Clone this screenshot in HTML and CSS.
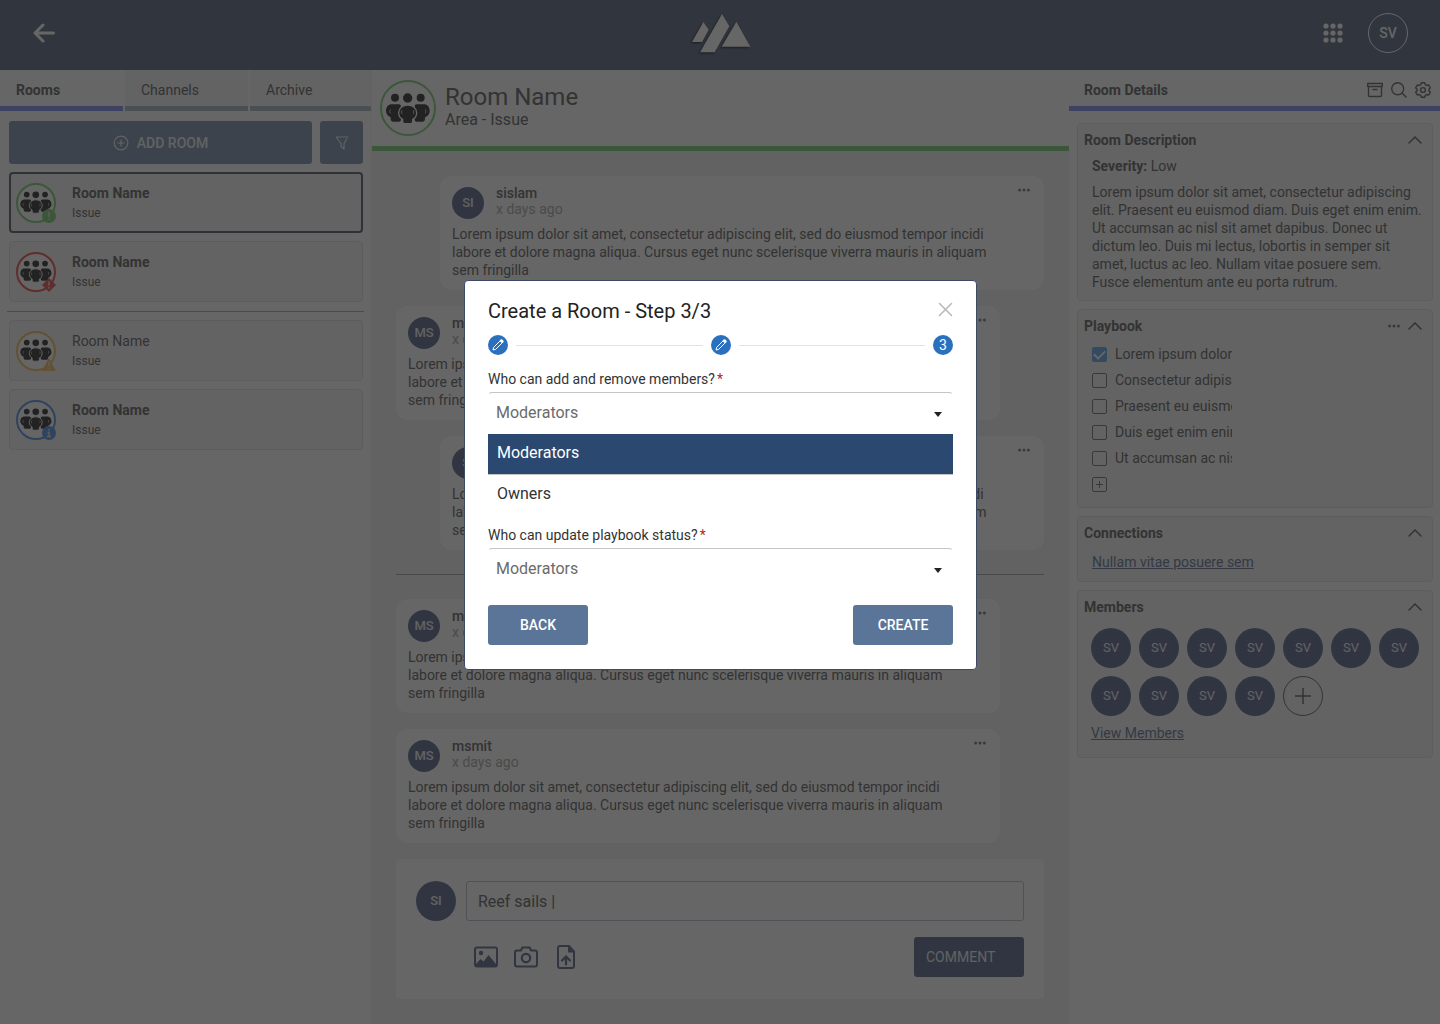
FILE: index.html
```html
<!DOCTYPE html>
<html lang="en">

<head>
  <meta charset="UTF-8">
  <meta name="viewport" content="width=device-width, initial-scale=1.0">
  <title>Create a Room</title>
  <link rel="stylesheet" href="styles.css">
</head>

<body>
  <!-- shared icons -->
  <svg class="sprite" aria-hidden="true">
    <symbol id="people" viewBox="-1 0 168 168">
      <g id="side">
        <circle cx="44" cy="53" r="12" />
        <path d="M32 73H56Q62 73 62 80V119Q62 125 56 125H38Q31 125 31 118V112C22 108 17 101 17 93C17 82 23 74 32 73Z" />
        <path class="slit" d="M30 88Q27 94 30 100" />
      </g>
      <use href="#side" transform="translate(165 0) scale(-1 1)" />
      <path class="cut" d="M82 75C98 75 109 85 109 98C109 108 103 115 97 118V125Q97 131 90 131H74Q67 131 67 125V118C61 115 55 108 55 98C55 85 66 75 82 75Z" />
      <circle cx="82" cy="54" r="14" />
      <path class="slit" d="M65 90Q62 96 65 102M99 90Q102 96 99 102" />
    </symbol>
    <symbol id="chevron" viewBox="0 0 14 8">
      <path d="M1 7L7 1L13 7" fill="none" stroke="currentColor" stroke-width="1.5" stroke-linecap="round" />
    </symbol>
    <symbol id="dots" viewBox="0 0 12 4">
      <circle cx="1.6" cy="2" r="1.5" /><circle cx="6" cy="2" r="1.5" /><circle cx="10.4" cy="2" r="1.5" />
    </symbol>
    <symbol id="pencil" viewBox="0 0 12 12">
      <path d="M1 11L1.7 8.3L8.1 1.9L10.1 3.9L3.7 10.3Z" fill="none" stroke="#fff" stroke-linejoin="round" />
      <path d="M7.6 1.4L9 .3Q9.6 0 10.2 .5L11.5 1.8Q12 2.4 11.5 3L10.5 4.3Z" fill="#fff" />
    </symbol>
  </svg>

  <header class="topbar">
    <button class="icon-btn back" aria-label="Back">
      <svg width="24" height="20" viewBox="0 0 24 20"><path d="M11 2L3 10L11 18M3.500 10H21.500" fill="none" stroke="currentColor" stroke-width="3" stroke-linecap="round" stroke-linejoin="round" /></svg>
    </button>
    <svg class="logo" width="64" height="44" viewBox="85 36 192 132">
      <path d="M131 69L147 92L127 129H97Z M187 45L209 82L165 160H121Z M230 68L272 143H186Z" />
    </svg>
    <div class="topbar-right">
      <button class="icon-btn" aria-label="Apps">
        <svg width="20" height="20" viewBox="0 0 20 20" fill="currentColor">
          <circle cx="3" cy="3" r="2.600" /><circle cx="10" cy="3" r="2.600" /><circle cx="17" cy="3" r="2.600" />
          <circle cx="3" cy="10" r="2.600" /><circle cx="10" cy="10" r="2.600" /><circle cx="17" cy="10" r="2.600" />
          <circle cx="3" cy="17" r="2.600" /><circle cx="10" cy="17" r="2.600" /><circle cx="17" cy="17" r="2.600" />
        </svg>
      </button>
      <button class="user">SV</button>
    </div>
  </header>

  <div class="layout">
    <aside class="rooms">
      <nav class="tabs">
        <a class="tab active" href="#rooms">Rooms</a>
        <a class="tab" href="#channels">Channels</a>
        <a class="tab" href="#archive">Archive</a>
      </nav>
      <div class="room-list">
        <div class="room-actions">
          <button class="add-room">
            <svg width="16" height="16" viewBox="0 0 16 16" fill="none" stroke="currentColor" stroke-width="1.2"><circle cx="8" cy="8" r="6.800" /><path d="M8 5V11M5 8H11" stroke-linecap="round" /></svg>
            ADD ROOM
          </button>
          <button class="filter" aria-label="Filter">
            <svg width="14" height="14" viewBox="0 0 14 14" fill="none" stroke="currentColor" stroke-width="1.2"><path d="M1 1H13.500M1 1L6 7.500V10.500L9 13V7.500L12 2.500" stroke-linejoin="round" /></svg>
          </button>
        </div>

        <a class="room selected" href="#room1">
          <span class="room-icon green">
            <svg><use href="#people" /></svg>
            <svg class="badge" viewBox="0 0 14 14"><circle cx="7" cy="7" r="7" /><path d="M7 3V8M7 9.500V11" /></svg>
          </span>
          <span class="room-text"><b>Room Name</b><small>Issue</small></span>
        </a>
        <a class="room" href="#room2">
          <span class="room-icon red">
            <svg><use href="#people" /></svg>
            <svg class="badge" viewBox="0 0 14 14"><path class="shape" d="M7 0L14 7L7 14L0 7Z" /><path d="M7 3.500V7.500M7 9V10.500" /></svg>
          </span>
          <span class="room-text"><b>Room Name</b><small>Issue</small></span>
        </a>
        <hr class="room-divider">
        <a class="room read" href="#room3">
          <span class="room-icon yellow">
            <svg><use href="#people" /></svg>
            <svg class="badge" viewBox="0 0 14 14"><path class="shape" d="M7 1L14 14H0Z" /><path d="M7 5V9.500M7 11V12.500" /></svg>
          </span>
          <span class="room-text"><b>Room Name</b><small>Issue</small></span>
        </a>
        <a class="room" href="#room4">
          <span class="room-icon blue">
            <svg><use href="#people" /></svg>
            <svg class="badge" viewBox="0 0 14 14"><circle cx="7" cy="7" r="7" /><path d="M7 3V4.500M5.500 6.500H7V10.500M5 10.500H9" /></svg>
          </span>
          <span class="room-text"><b>Room Name</b><small>Issue</small></span>
        </a>
      </div>
    </aside>

    <main class="chat">
      <div class="chat-head">
        <span class="room-icon large green"><svg><use href="#people" /></svg></span>
        <div>
          <h1>Room Name</h1>
          <p>Area - Issue</p>
        </div>
      </div>

      <div class="chat-body">
        <article class="message mine">
          <div class="message-head">
            <span class="avatar small">SI</span>
            <div><b>sislam</b><time>x days ago</time></div>
            <button class="icon-btn more" aria-label="More"><svg width="12" height="4"><use href="#dots" /></svg></button>
          </div>
          <p>Lorem ipsum dolor sit amet, consectetur adipiscing elit, sed do eiusmod tempor incidi labore et dolore magna aliqua. Cursus eget nunc scelerisque viverra mauris in aliquam sem fringilla</p>
        </article>
        <article class="message">
          <div class="message-head">
            <span class="avatar small">MS</span>
            <div><b>msmit</b><time>x days ago</time></div>
            <button class="icon-btn more" aria-label="More"><svg width="12" height="4"><use href="#dots" /></svg></button>
          </div>
          <p>Lorem ipsum dolor sit amet, consectetur adipiscing elit, sed do eiusmod tempor incidi labore et dolore magna aliqua. Cursus eget nunc scelerisque viverra mauris in aliquam sem fringilla</p>
        </article>
        <article class="message mine">
          <div class="message-head">
            <span class="avatar small">SI</span>
            <div><b>sislam</b><time>x days ago</time></div>
            <button class="icon-btn more" aria-label="More"><svg width="12" height="4"><use href="#dots" /></svg></button>
          </div>
          <p>Lorem ipsum dolor sit amet, consectetur adipiscing elit, sed do eiusmod tempor incidi labore et dolore magna aliqua. Cursus eget nunc scelerisque viverra mauris in aliquam sem fringilla</p>
        </article>
        <hr class="chat-divider">
        <article class="message">
          <div class="message-head">
            <span class="avatar small">MS</span>
            <div><b>msmit</b><time>x days ago</time></div>
            <button class="icon-btn more" aria-label="More"><svg width="12" height="4"><use href="#dots" /></svg></button>
          </div>
          <p>Lorem ipsum dolor sit amet, consectetur adipiscing elit, sed do eiusmod tempor incidi labore et dolore magna aliqua. Cursus eget nunc scelerisque viverra mauris in aliquam sem fringilla</p>
        </article>
        <article class="message">
          <div class="message-head">
            <span class="avatar small">MS</span>
            <div><b>msmit</b><time>x days ago</time></div>
            <button class="icon-btn more" aria-label="More"><svg width="12" height="4"><use href="#dots" /></svg></button>
          </div>
          <p>Lorem ipsum dolor sit amet, consectetur adipiscing elit, sed do eiusmod tempor incidi labore et dolore magna aliqua. Cursus eget nunc scelerisque viverra mauris in aliquam sem fringilla</p>
        </article>

        <form class="composer">
          <span class="avatar">SI</span>
          <div class="composer-main">
            <input type="text" value="Reef sails |" aria-label="Comment">
            <div class="composer-row">
              <button type="button" class="icon-btn" aria-label="Image">
                <svg width="24" height="24" viewBox="0 0 24 24"><rect x="1" y="2.500" width="22" height="19" rx="2" fill="none" stroke="currentColor" stroke-width="2" /><circle cx="7" cy="8" r="2.200" fill="currentColor" /><path d="M2 21V19L6.500 14L9.500 16.500L14.500 10L22 19V21Z" fill="currentColor" /></svg>
              </button>
              <button type="button" class="icon-btn" aria-label="Camera">
                <svg width="24" height="24" viewBox="0 0 24 24" fill="none" stroke="currentColor" stroke-width="2"><path d="M3 5.500H7L8.300 2.500H15.700L17 5.500H21Q23 5.500 23 7.500V19.500Q23 21.500 21 21.500H3Q1 21.500 1 19.500V7.500Q1 5.500 3 5.500Z" stroke-linejoin="round" /><circle cx="12" cy="13" r="4.200" stroke-width="2.200" /></svg>
              </button>
              <button type="button" class="icon-btn" aria-label="Upload file">
                <svg width="24" height="24" viewBox="0 0 24 24" fill="none" stroke="currentColor" stroke-width="2"><path d="M6 1H15L20 6.500V21Q20 23 18 23H6Q4 23 4 21V3Q4 1 6 1Z" stroke-linejoin="round" /><path d="M14 1V7.500H20Z" fill="currentColor" stroke="none" /><path d="M12 19.500V12M8 15.500L12 11.500L16 15.500" stroke-width="2.200" stroke-linecap="round" /></svg>
              </button>
              <button type="button" class="comment">COMMENT</button>
            </div>
          </div>
        </form>
      </div>
    </main>

    <aside class="details">
      <div class="details-head">
        <h2>Room Details</h2>
        <button class="icon-btn" aria-label="Archive">
          <svg width="16" height="16" viewBox="0 0 16 16" fill="none" stroke="currentColor"><path d="M.700 1.500H15.300V4.500H.700ZM1.500 4.500V13.500Q1.500 14.500 2.500 14.500H13.500Q14.500 14.500 14.500 13.500V4.500M5.500 7.500H10.500" stroke-linejoin="round" stroke-width="1.400" /></svg>
        </button>
        <button class="icon-btn" aria-label="Search">
          <svg width="16" height="16" viewBox="0 0 16 16" fill="none" stroke="currentColor" stroke-width="1.400"><circle cx="6.700" cy="6.700" r="6" /><path d="M11 11L15.500 15.500" /></svg>
        </button>
        <button class="icon-btn" aria-label="Settings">
          <svg width="16" height="16" viewBox="0 0 16 16" fill="none" stroke="currentColor" stroke-width="1.400"><circle cx="8" cy="8" r="2.400" /><path d="M6.300 .700H9.700L10.300 2.700L11.600 3.500L13.700 3L15.300 5.900L13.900 7.300V8.700L15.300 10.100L13.700 13L11.600 12.500L10.300 13.300L9.700 15.300H6.300L5.700 13.300L4.400 12.500L2.300 13L.700 10.100L2.100 8.700V7.300L.700 5.900L2.300 3L4.400 3.500L5.700 2.700Z" stroke-linejoin="round" /></svg>
        </button>
      </div>

      <div class="details-list">
        <section class="card description">
          <div class="card-head"><h3>Room Description</h3><button class="icon-btn" aria-label="Collapse"><svg width="14" height="8"><use href="#chevron" /></svg></button></div>
          <p class="severity"><b>Severity:</b> Low</p>
          <p>Lorem ipsum dolor sit amet, consectetur adipiscing elit. Praesent eu euismod diam. Duis eget enim enim. Ut accumsan ac nisl sit amet dapibus. Donec ut dictum leo. Duis mi lectus, lobortis in semper sit amet, luctus ac leo. Nullam vitae posuere sem. Fusce elementum ante eu porta rutrum.</p>
        </section>

        <section class="card">
          <div class="card-head"><h3>Playbook</h3><button class="icon-btn" aria-label="More"><svg class="dots" width="12" height="4"><use href="#dots" /></svg></button><button class="icon-btn" aria-label="Collapse"><svg width="14" height="8"><use href="#chevron" /></svg></button></div>
          <label class="task"><input type="checkbox" checked><span>Lorem ipsum dolor</span></label>
          <label class="task"><input type="checkbox"><span>Consectetur adipiscing</span></label>
          <label class="task"><input type="checkbox"><span>Praesent eu euismod</span></label>
          <label class="task"><input type="checkbox"><span>Duis eget enim enim</span></label>
          <label class="task"><input type="checkbox"><span>Ut accumsan ac nisl</span></label>
          <div class="task">
            <button class="add-task" aria-label="Add task"><svg width="15" height="15" viewBox="0 0 15 15" fill="none" stroke="currentColor"><rect x=".5" y=".5" width="14" height="14" rx="1.500" /><path d="M7.500 4V11M4 7.500H11" /></svg></button>
          </div>
        </section>

        <section class="card connections">
          <div class="card-head"><h3>Connections</h3><button class="icon-btn" aria-label="Collapse"><svg width="14" height="8"><use href="#chevron" /></svg></button></div>
          <a href="#connection">Nullam vitae posuere sem</a>
        </section>

        <section class="card members">
          <div class="card-head"><h3>Members</h3><button class="icon-btn" aria-label="Collapse"><svg width="14" height="8"><use href="#chevron" /></svg></button></div>
          <div class="member-list">
            <span class="avatar">SV</span>
            <span class="avatar">SV</span>
            <span class="avatar">SV</span>
            <span class="avatar">SV</span>
            <span class="avatar">SV</span>
            <span class="avatar">SV</span>
            <span class="avatar">SV</span>
            <span class="avatar">SV</span>
            <span class="avatar">SV</span>
            <span class="avatar">SV</span>
            <span class="avatar">SV</span>
            <button class="add-member" aria-label="Add member"><svg width="16" height="16" viewBox="0 0 16 16" stroke="currentColor" stroke-width="1.500"><path d="M8 0V16M0 8H16" /></svg></button>
          </div>
          <a href="#all-members">View Members</a>
        </section>
      </div>
    </aside>
  </div>

  <div class="backdrop">
    <form class="modal" role="dialog" aria-labelledby="modal-title">
      <div class="modal-head">
        <h2 id="modal-title">Create a Room - Step 3/3</h2>
        <button type="button" class="icon-btn close" aria-label="Close"><svg width="15" height="15" viewBox="0 0 15 15" stroke="currentColor" stroke-width="1.500" stroke-linecap="round"><path d="M1.500 1.500L13.500 13.500M13.500 1.500L1.500 13.500" /></svg></button>
      </div>
      <div class="steps">
        <span class="step"><svg width="12" height="12"><use href="#pencil" /></svg></span>
        <i></i>
        <span class="step"><svg width="12" height="12"><use href="#pencil" /></svg></span>
        <i></i>
        <span class="step">3</span>
      </div>

      <label for="members">Who can add and remove members?<em>*</em></label>
      <div class="select">
        <select id="members"><option>Moderators</option><option>Owners</option></select>
      </div>
      <ul class="options" role="listbox" aria-label="Who can add and remove members">
        <li class="current" role="option" aria-selected="true">Moderators</li>
        <li role="option">Owners</li>
      </ul>

      <label for="playbook">Who can update playbook status?<em>*</em></label>
      <div class="select">
        <select id="playbook"><option>Moderators</option><option>Owners</option></select>
      </div>

      <div class="modal-actions">
        <button type="button">BACK</button>
        <button type="button">CREATE</button>
      </div>
    </form>
  </div>
</body>

</html>
```
FILE: styles.css
```css
* {
  box-sizing: border-box;
}
body {
  margin: 0;
  min-height: 100vh;
  display: flex;
  flex-direction: column;
  font-family: Roboto, "Liberation Sans", sans-serif;
  font-size: 14px;
  line-height: 18px;
  color: #808080;
  background: #fff;
}
h1, h2, h3, p {
  margin: 0;
}
button, input, select {
  font-family: inherit;
  font-size: 14px;
  color: inherit;
}
button {
  padding: 0;
  border: 0;
  border-radius: 3px;
  cursor: pointer;
}
.icon-btn {
  display: flex;
  background: none;
}
.sprite {
  position: absolute;
  width: 0;
  height: 0;
}
.slit {
  fill: none;
  stroke: #ccc;
  stroke-width: 3;
}
.cut {
  stroke: #fff;
  stroke-width: 4;
}

/* top bar */
.topbar {
  display: grid;
  grid-template-columns: 1fr auto 1fr;
  align-items: center;
  height: 70px;
  padding: 0 32px;
  padding-bottom: 4px;
  background: #7b859b;
  color: #fff;
}
.back {
  justify-self: start;
}
.logo {
  fill: #fff;
  filter: drop-shadow(-1px 1px 1px #444);
}
.topbar-right {
  display: flex;
  justify-content: flex-end;
  align-items: center;
  gap: 25px;
}
.user {
  width: 40px;
  height: 40px;
  border: 1px solid #fff;
  border-radius: 50%;
  background: none;
  font-weight: 500;
}

.layout {
  flex: 1;
  display: grid;
  grid-template-columns: 371px 1fr 371px;
}

/* rooms */
.tabs {
  display: flex;
  gap: 2px;
}
.tab {
  width: 123px;
  height: 41px;
  padding: 11px 16px;
  border-bottom: 5px solid #bac6d0;
  background: #f7f7f7;
  color: #808080;
  text-decoration: none;
}
.tab:last-child {
  flex: 1;
}
.tab.active {
  border-color: #9aa2f4;
  background: #fff;
  font-weight: 700;
}
.room-list {
  display: flex;
  flex-direction: column;
  gap: 8px;
  padding: 10px 8px 10px 9px;
}
.room-actions {
  display: flex;
  gap: 8px;
}
.room-actions button {
  display: flex;
  align-items: center;
  justify-content: center;
  gap: 8px;
  height: 43px;
  background: #98a9c1;
  color: #f4f4f4;
  font-weight: 500;
}
.add-room {
  flex: 1;
}
.room-actions .filter {
  width: 43px;
}
.room {
  display: flex;
  align-items: center;
  gap: 16px;
  height: 61px;
  padding: 0 6px;
  border: 1px solid #e8e8e8;
  border-radius: 4px;
  background: #f8f8f8;
  color: inherit;
  text-decoration: none;
}
.room.selected {
  padding: 0 5px;
  border: 2px solid #757c88;
}
.room-icon {
  position: relative;
  flex: none;
  width: 40px;
  height: 40px;
  border: 2px solid currentColor;
  border-radius: 50%;
  background: #fff;
}
.room-icon svg {
  display: block;
  width: 40px;
  height: 40px;
  margin: -3px -2px;
  fill: #555;
}
.room-icon.large,
.room-icon.large svg {
  width: 56px;
  height: 56px;
}
.room-icon.large svg {
  margin: -2px;
}
.room-icon .badge {
  position: absolute;
  right: -2px;
  bottom: -2px;
  width: 14px;
  height: 14px;
  margin: 0;
  fill: currentColor;
  stroke: #e8e8e8;
  stroke-width: 1.5;
}
.badge circle,
.badge .shape {
  stroke: none;
}
.green {
  color: #96d890;
}
.red {
  color: #f07070;
}
.yellow {
  color: #f4cc7c;
}
.blue {
  color: #78a8ec;
}
.room-text b,
.room-text small {
  display: block;
  line-height: 20px;
}
.room-text small {
  font-size: 12px;
}
.room.read b {
  font-weight: 400;
}
.room-divider {
  width: calc(100% + 3px);
  height: 2px;
  margin: 0 -2px;
  border: 0;
  border-bottom: 1px solid #bbb;
}

/* chat */
.chat {
  display: flex;
  flex-direction: column;
  min-width: 0;
  border-left: 1px solid #f5f5f5;
  background: #f5f5f5;
}
.chat-head {
  display: flex;
  gap: 9px;
  height: 81px;
  padding: 10px 8px;
  border-bottom: 5px solid #96d890;
  background: #fff;
}
.chat-head h1 {
  font-size: 24px;
  font-weight: 400;
  line-height: 34px;
}
.chat-head p {
  font-size: 16px;
  line-height: 12px;
}
.chat-body {
  display: flex;
  flex-direction: column;
  gap: 16px;
  padding: 25px;
  padding-left: 24px;
}
.message {
  margin-right: 44px;
  padding: 9px 12px 11px;
  border-radius: 12px;
  background: #fff;
}
.message.mine {
  margin: 0 0 0 44px;
}
.message p {
  padding-right: 32px;
}
.message-head {
  display: flex;
  align-items: flex-start;
  gap: 12px;
  height: 34px;
  margin-bottom: 6px;
}
.message-head b,
.message-head time {
  display: block;
  line-height: 16px;
}
.message-head b {
  font-weight: 500;
}
.message-head time {
  color: #bababa;
}
.more {
  margin: 3px 2px 0 auto;
}
.more svg,
.dots {
  fill: #909090;
}
.avatar {
  flex: none;
  display: flex;
  align-items: center;
  justify-content: center;
  width: 40px;
  height: 40px;
  border-radius: 50%;
  background: #7986a2;
  color: #f4f4f4;
  font-size: 13px;
}
.avatar.small {
  width: 32px;
  height: 32px;
  margin-top: 2px;
  font-weight: 500;
}
.chat-divider {
  width: 100%;
  margin: 8px 0;
  border: 0;
  border-bottom: 1px solid #b5b5b5;
}
.composer {
  display: flex;
  gap: 10px;
  padding: 22px 20px;
  border-radius: 4px;
  background: #fff;
}
.composer .avatar {
  font-weight: 500;
}
.composer-main {
  flex: 1;
}
.composer input {
  display: block;
  width: 100%;
  height: 40px;
  padding: 0 11px;
  border: 1px solid #c4cbd6;
  border-radius: 3px;
  background: #fff;
  font-size: 16px;
}
.composer-row {
  display: flex;
  align-items: center;
  gap: 16px;
  margin-top: 16px;
  padding-left: 8px;
  color: #7986a2;
}
.comment {
  width: 110px;
  height: 40px;
  margin-left: auto;
  padding-left: 12px;
  background: #7986a2;
  color: #f4f4f4;
  text-align: left;
}

/* details */
.details-head {
  display: flex;
  align-items: center;
  gap: 8px;
  height: 41px;
  padding: 3px 9px 0 15px;
  border-bottom: 5px solid #9aa2f4;
}
.details-head h2,
.card-head h3 {
  margin-right: auto;
  font-size: 14px;
  font-weight: 700;
}
.details-list {
  display: flex;
  flex-direction: column;
  gap: 8px;
  padding: 12px 7px 12px 8px;
}
.card {
  padding: 8px 10px 10px 14px;
  border: 1px solid #e8e8e8;
  border-radius: 4px;
  background: #f8f8f8;
}
.card-head {
  display: flex;
  align-items: center;
  gap: 8px;
  height: 16px;
  margin: 0 0 7px -8px;
}
.card a {
  color: #8290ac;
}
.severity {
  padding: 2px 0 8px;
}
.description {
  padding-bottom: 9px;
}
.task {
  display: flex;
  align-items: center;
  gap: 8px;
  height: 26px;
}
.task input {
  appearance: none;
  flex: none;
  display: grid;
  place-items: center;
  width: 15px;
  height: 15px;
  margin: 0;
  border: 1px solid #909090;
  border-radius: 2px;
}
.task input:checked {
  border-color: #80b8f0;
  background: #80b8f0;
}
.task input:checked::before {
  content: "";
  width: 9px;
  height: 5px;
  border: solid #fff;
  border-width: 0 0 2px 2px;
  transform: translateY(-1px) rotate(-45deg);
}
.task span {
  width: 117px;
  overflow: hidden;
  white-space: nowrap;
}
.add-task {
  display: flex;
  background: none;
  color: #909090;
}
.connections .card-head {
  margin-bottom: 12px;
}
.connections a,
.members a {
  display: block;
}
.members {
  padding: 8px 10px 15px 13px;
}
.members .card-head {
  margin: 0 0 13px -7px;
}
.member-list {
  display: flex;
  flex-wrap: wrap;
  gap: 8px;
  margin: 0 -4px 8px 0;
}
.add-member {
  display: grid;
  place-items: center;
  width: 40px;
  height: 40px;
  border: 1px solid #808080;
  border-radius: 50%;
  background: none;
}

/* modal */
.backdrop {
  position: fixed;
  top: 0;
  right: 0;
  bottom: 0;
  left: 0;
  display: flex;
  align-items: center;
  justify-content: center;
  padding: 0 0 74px 1px;
  background: rgba(0, 0, 0, 0.6);
}
.modal {
  width: 513px;
  padding: 18px 23px 24px;
  border: 1px solid #3c4a68;
  border-radius: 4px;
  background: #fff;
  color: #333;
}
.modal-head {
  display: flex;
  justify-content: space-between;
  height: 24px;
}
.modal-head h2 {
  font-size: 20px;
  font-weight: 400;
  line-height: 24px;
  color: #222;
}
.close {
  align-items: center;
  height: 20px;
  color: #b4b8bb;
}
.steps {
  display: flex;
  align-items: center;
  gap: 8px;
  margin: 12px 0 15px;
}
.steps i {
  flex: 1;
  height: 1px;
  background: #e2e2e2;
}
.step {
  display: flex;
  align-items: center;
  justify-content: center;
  width: 20px;
  height: 20px;
  border-radius: 50%;
  background: #2a70bf;
  color: #fff;
}
.modal label {
  display: block;
  margin-bottom: 4px;
}
.modal em {
  margin-left: 2px;
  color: #b3261e;
  font-style: normal;
}
.select {
  position: relative;
}
.select::after {
  content: "";
  position: absolute;
  top: 20px;
  right: 11px;
  border: 4px solid transparent;
  border-top: 5px solid #222;
  border-bottom: 0;
}
.select select {
  display: block;
  appearance: none;
  width: 100%;
  height: 41px;
  padding: 0 7px;
  border: 1px solid transparent;
  border-top-color: #c4c4c4;
  border-radius: 4px;
  background: #fff;
  color: #6b6b6b;
  font-size: 16px;
}
.options {
  margin: 1px 0 11px;
  padding: 0;
  list-style: none;
  font-size: 16px;
}
.options li {
  height: 40px;
  padding: 10px 9px;
}
.options .current {
  height: 41px;
  border-bottom: 1px solid #c4c4c4;
  background: #2b4871;
  color: #fff;
}
.modal-actions {
  display: flex;
  justify-content: space-between;
  margin-top: 16px;
}
.modal-actions button {
  width: 100px;
  height: 40px;
  background: #5b7599;
  color: #fff;
  font-weight: 500;
}
```
